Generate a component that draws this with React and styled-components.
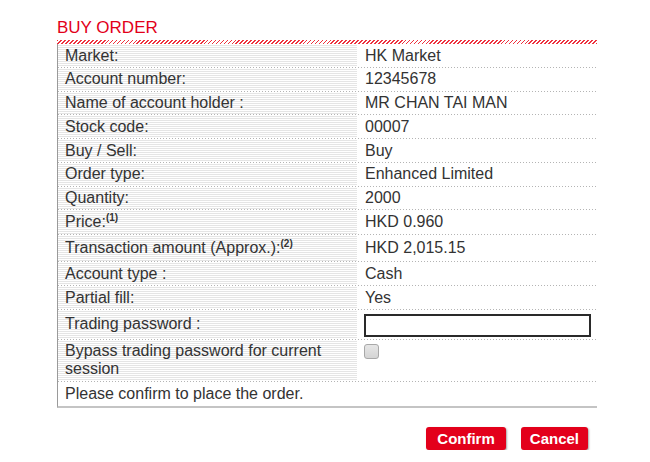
import React from "react";
import styled, { createGlobalStyle } from "styled-components";

const GlobalStyle = createGlobalStyle`
  html, body {
    margin: 0;
    padding: 0;
    background: #fff;
  }
  body {
    font-family: "Liberation Sans", Arial, sans-serif;
    color: #333;
  }
`;

const Page = styled.div`
  width: 540px;
  padding: 18px 0 0 57px;
`;

const Title = styled.h2`
  margin: 0 0 2px;
  font-size: 17px;
  font-weight: normal;
  line-height: 20px;
  color: #e2001a;
`;

const Hatch = styled.div`
  height: 4px;
  background: repeating-linear-gradient(
    -45deg,
    #ee3340 0 1.2px,
    #fff 1.2px 2.8px
  );
`;

const Table = styled.div`
  border-left: 1px solid #9a9a9a;
  border-bottom: 2px solid #c4c4c4;
`;

const Row = styled.div`
  display: grid;
  grid-template-columns: ${(p) => (p.$full ? "1fr" : "299px 1fr")};
  font-size: 16px;
  line-height: 18px;
`;

const Label = styled.div`
  padding: ${(p) => p.$pad || "2.5px 7px 2.25px"};
  background: repeating-linear-gradient(
    to bottom,
    #fff 0 1px,
    #e5e5e5 1px 2px
  );
  display: flex;
  align-items: ${(p) => (p.$center ? "center" : "flex-start")};
`;

const Value = styled.div`
  padding: ${(p) => p.$pad || "2.5px 7px 2.25px 8px"};
`;

const Full = styled.div`
  padding: 3px 7px 3px;
`;

const Dots = styled.div`
  height: 1px;
  background-image: linear-gradient(to right, #b4b4b4 0 1px, transparent 1px);
  background-size: 3px 1px;
  background-repeat: repeat-x;
`;

const Note = styled.sup`
  font-size: 10px;
  font-weight: bold;
  line-height: 0;
  vertical-align: 6px;
`;

const PasswordInput = styled.input`
  box-sizing: border-box;
  width: 227px;
  height: 23px;
  margin: 0;
  border: 2px solid #2a2a2a;
  background: #fff;
  outline: none;
  display: block;
`;

const Check = styled.span`
  display: block;
  box-sizing: border-box;
  width: 15px;
  height: 15px;
  margin-top: 2px;
  border: 1px solid #a8a8a8;
  border-radius: 3px;
  background: linear-gradient(#e6e6e6, #d4d4d4);
`;

const Actions = styled.div`
  display: flex;
  justify-content: flex-end;
  gap: 15px;
  padding: 19px 9px 0 0;
`;

const Button = styled.button`
  height: 23px;
  padding: 0 ${(p) => p.$px}px;
  border: none;
  border-radius: 3px;
  background: #e3001b;
  color: #fff;
  font-family: "Liberation Sans", Arial, sans-serif;
  font-size: 15px;
  font-weight: bold;
  box-shadow: 1px 1px 2px rgba(0, 0, 0, 0.35);
  cursor: pointer;
`;

const rows = [
  { label: "Market:", value: "HK Market" },
  { label: "Account number:", value: "12345678" },
  { label: "Name of account holder :", value: "MR CHAN TAI MAN" },
  { label: "Stock code:", value: "00007" },
  { label: "Buy / Sell:", value: "Buy" },
  { label: "Order type:", value: "Enhanced Limited" },
  { label: "Quantity:", value: "2000" },
  { label: "Price:", note: "(1)", value: "HKD 0.960", pad: [2.5, 3.5] },
  {
    label: "Transaction amount (Approx.):",
    note: "(2)",
    value: "HKD 2,015.15",
    pad: [3.5, 4.5],
  },
  { label: "Account type :", value: "Cash" },
  { label: "Partial fill:", value: "Yes" },
];

export default function App() {
  return (
    <Page>
      <GlobalStyle />
      <Title>BUY ORDER</Title>
      <Hatch />
      <Table>
        {rows.map((r) => (
          <React.Fragment key={r.label}>
            <Row>
              <Label $pad={r.pad && `${r.pad[0]}px 7px ${r.pad[1]}px`}>
                <span>
                  {r.label}
                  {r.note && <Note>{r.note}</Note>}
                </span>
              </Label>
              <Value $pad={r.pad && `${r.pad[0]}px 7px ${r.pad[1]}px 8px`}>
                {r.value}
              </Value>
            </Row>
            <Dots />
          </React.Fragment>
        ))}
        <Row>
          <Label $center>Trading password :</Label>
          <Value $pad="4px 6px 2px 7px">
            <PasswordInput type="password" />
          </Value>
        </Row>
        <Dots />
        <Row>
          <Label $pad="2px 7px 3px">
            Bypass trading password for current session
          </Label>
          <Value $pad="2px 7px 3px 7px">
            <Check />
          </Value>
        </Row>
        <Dots />
        <Row $full>
          <Full>Please confirm to place the order.</Full>
        </Row>
      </Table>
      <Actions>
        <Button $px={11}>Confirm</Button>
        <Button $px={9}>Cancel</Button>
      </Actions>
    </Page>
  );
}
